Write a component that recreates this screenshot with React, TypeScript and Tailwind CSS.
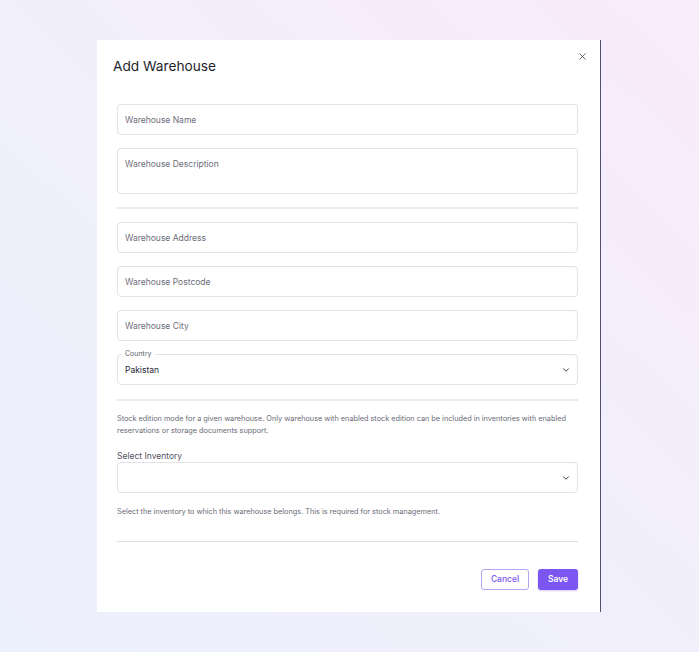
import type React from 'react';
import { X, ChevronDown } from 'lucide-react';

function TextField({ placeholder, className = '' }: { placeholder: string; className?: string }): React.ReactElement {
    return (
        <input
            placeholder={placeholder}
            className={`block w-full h-[31px] rounded-[4px] border border-[#e1e1e6] bg-white px-[7px] text-[8.5px] text-[#2a2a35] placeholder:text-[#6d6d79] outline-none ${className}`}
        />
    );
}

export default function App(): React.ReactElement {
    return (
        <div className="flex h-screen w-full items-center justify-center bg-linear-to-tr from-[#eceffc] via-[#f1effc] to-[#f9ebfb] font-['Inter','Noto_Sans',sans-serif]">
            <div className="relative mr-px w-[504px] bg-white border-r border-[#51516a] pb-[22px]">
                {/* Header */}
                <div className="pt-4 pl-4">
                    <h2 className="text-[13.7px] leading-5 font-normal text-[#1e1e2c]">Add Warehouse</h2>
                </div>
                <button type="button" aria-label="Close" className="absolute top-[11px] right-[12px] text-[#33333f]">
                    <X size={11} strokeWidth={1.6} />
                </button>

                {/* Form */}
                <div className="pl-5 pr-[22px] pt-[28px]">
                    <TextField placeholder="Warehouse Name" />
                    <textarea
                        placeholder="Warehouse Description"
                        className="mt-[13px] block w-full h-[46px] resize-none rounded-[4px] border border-[#e1e1e6] px-[7px] pt-[9px] text-[8.5px] leading-[12px] placeholder:text-[#6d6d79] outline-none"
                    />
                    <div className="mt-[13px] h-[2px] bg-[#e9e9ee]" />
                    <TextField placeholder="Warehouse Address" className="mt-[13px]" />
                    <TextField placeholder="Warehouse Postcode" className="mt-[13px]" />
                    <TextField placeholder="Warehouse City" className="mt-[13px]" />

                    {/* Country */}
                    <div className="relative mt-[13px] flex h-[31px] items-center justify-between rounded-[4px] border border-[#e1e1e6] pl-[7px] pr-[6px]">
                        <span className="absolute -top-[6px] left-[4px] bg-white px-[3px] text-[7px] leading-[10px] text-[#5d5d6a]">Country</span>
                        <span className="pt-[1px] text-[8.5px] text-[#262632]">Pakistan</span>
                        <ChevronDown size={10} strokeWidth={2.2} className="text-[#2e2e3a]" />
                    </div>

                    <div className="mt-[14px] h-[2px] bg-[#e9e9ee]" />

                    <p className="mt-[12px] text-[7.3px] leading-[11.5px] text-[#6a6a76]">
                        Stock edition mode for a given warehouse. Only warehouse with enabled stock edition can be included in inventories with enabled
                        reservations or storage documents support.
                    </p>

                    <label className="mt-[14px] block text-[8.5px] leading-[12px] text-[#52525e]">Select Inventory</label>
                    <div className="flex h-[31px] items-center justify-end rounded-[4px] border border-[#e1e1e6] pr-[6px]">
                        <ChevronDown size={10} strokeWidth={2.2} className="text-[#2e2e3a]" />
                    </div>

                    <p className="mt-[13px] text-[7.3px] leading-[12px] text-[#6a6a76]">
                        Select the inventory to which this warehouse belongs. This is required for stock management.
                    </p>

                    <div className="mt-[23px] h-px bg-[#dedee3]" />

                    {/* Actions */}
                    <div className="mt-[27px] flex justify-end gap-[9px]">
                        <button
                            type="button"
                            className="h-[21px] w-[48px] rounded-[3px] border border-[#b9a3f8] bg-white text-[8.5px] font-medium text-[#7a55ee]"
                        >
                            Cancel
                        </button>
                        <button
                            type="button"
                            className="h-[21px] w-[40px] rounded-[3px] bg-[#7b56f0] text-[8.5px] font-semibold text-white shadow-[0_1px_2px_rgba(90,60,200,0.25)]"
                        >
                            Save
                        </button>
                    </div>
                </div>
            </div>
        </div>
    );
}
